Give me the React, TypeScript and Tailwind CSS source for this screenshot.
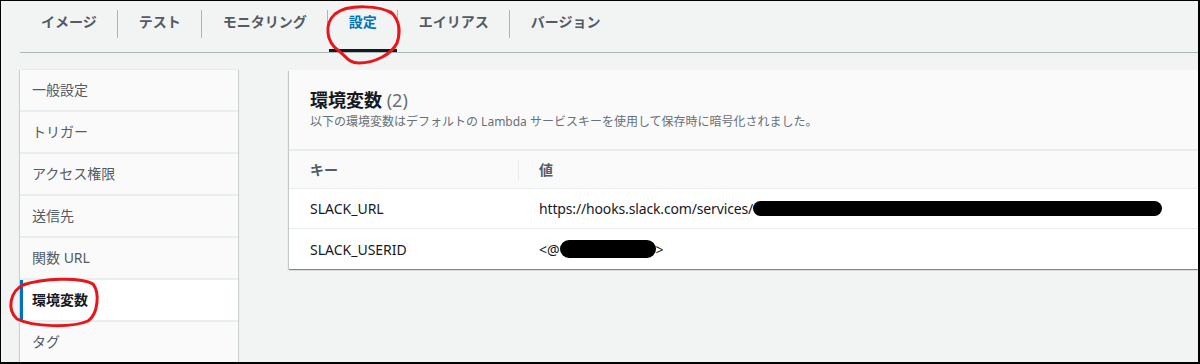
import React from 'react';

const tabs = ['イメージ', 'テスト', 'モニタリング', '設定', 'エイリアス', 'バージョン'];
const activeTab = '設定';

const sideItems = ['一般設定', 'トリガー', 'アクセス権限', '送信先', '関数 URL', '環境変数', 'タグ'];
const activeSide = '環境変数';

const Tabs = () => (
    <div className="ml-[19px] flex h-[52px] items-start border-b border-[#aab7b8]">
        {tabs.map((t, i) => (
            <React.Fragment key={t}>
                {i > 0 && <div className="mt-[9px] h-[28px] w-px bg-[#aab7b8]" />}
                <div
                    className={`relative h-[51px] pr-[20px] pl-[21px] pt-[11px] text-[14px] leading-[20px] font-bold ${
                        t === activeTab ? 'text-[#0073bb]' : 'text-[#545b64]'
                    }`}
                >
                    {t}
                    {t === activeTab && (
                        <div className="absolute bottom-0 left-[1px] right-0 h-[3px] bg-[#16191f]" />
                    )}
                </div>
            </React.Fragment>
        ))}
    </div>
);

const Sidebar = () => (
    <div className="flex w-[218px] shrink-0 flex-col gap-[2px] bg-[#eaeded] shadow-[0_1px_1px_0_rgba(0,28,36,0.2),1px_0_1px_0_rgba(0,28,36,0.12),-1px_0_1px_0_rgba(0,28,36,0.12)]">
        {sideItems.map((s) => {
            const active = s === activeSide;
            return (
                <div
                    key={s}
                    className={`flex h-[40px] shrink-0 items-center pb-[1px] text-[14px] ${
                        active
                            ? 'border-l-[3px] border-[#0073bb] bg-white pl-[9px] font-bold text-[#16191f]'
                            : 'bg-[#fafafa] pl-[12px] text-[#545b64]'
                    }`}
                >
                    {s}
                </div>
            );
        })}
    </div>
);

const Redacted = ({ w, h }: { w: number; h: number }) => (
    <span className="inline-block rounded-full bg-black align-middle" style={{ width: w, height: h }} />
);

const EnvPanel = () => (
    <div className="flex-1 self-start bg-white shadow-[0_1px_1px_0_rgba(0,28,36,0.3),1px_1px_1px_0_rgba(0,28,36,0.15),-1px_1px_1px_0_rgba(0,28,36,0.15)]">
        <div className="h-[81px] border-b-2 border-[#eaeded] bg-[#fafafa] px-[21px] pt-[17px]">
            <h2 className="text-[18px] leading-[26px] font-bold text-[#16191f]">
                環境変数 <span className="font-normal text-[#687078]">(2)</span>
            </h2>
            <p className="text-[12px] leading-[18px] text-[#687078]">
                以下の環境変数はデフォルトの Lambda サービスキーを使用して保存時に暗号化されました。
            </p>
        </div>
        <div className="flex h-[38px] items-center border-b border-[#eaeded] bg-[#fafafa] text-[14px] font-bold text-[#545b64]">
            <div className="w-[229px] pl-[21px]">キー</div>
            <div className="h-[20px] w-px bg-[#eaeded]" />
            <div className="pl-[20px]">値</div>
        </div>
        <div className="flex h-[40px] items-center border-b border-[#eaeded] text-[14px] text-[#16191f]">
            <div className="w-[250px] pl-[21px]">SLACK_URL</div>
            <div className="flex items-center tracking-[-0.15px]">
                https://hooks.slack.com/services/
                <Redacted w={409} h={15} />
            </div>
        </div>
        <div className="flex h-[40px] items-center text-[14px] text-[#16191f]">
            <div className="w-[250px] pl-[21px]">SLACK_USERID</div>
            <div className="flex items-center">
                &lt;@
                <Redacted w={96} h={18} />
                &gt;
            </div>
        </div>
    </div>
);

const Annotations = () => (
    <svg className="pointer-events-none absolute inset-0" width="1200" height="364" fill="none">
        <path
            d="M392 13 C380 4, 346 3, 334 13 C323 23, 325 41, 338 50 C345 55, 347 62, 358 62 C373 62, 390 54, 396 42 C400 30, 399 20, 390 11"
            stroke="#e8151b"
            strokeWidth="3"
            strokeLinecap="round"
        />
        <path
            d="M22 284 C42 277, 80 276, 92 283 C99 292, 97 313, 87 320 C71 327, 32 326, 16 318 C6 309, 8 290, 24 283"
            stroke="#e8151b"
            strokeWidth="3"
            strokeLinecap="round"
        />
    </svg>
);

const App = () => {
    return (
        <div className="relative h-[364px] w-[1200px] overflow-hidden border-t border-r-2 border-b-2 border-l border-black bg-[#f2f3f3] font-['Noto_Sans','Noto_Sans_CJK_JP',sans-serif]">
            <Tabs />
            <div className="mt-[17px] flex gap-[51px] pl-[19px]">
                <Sidebar />
                <EnvPanel />
            </div>
            <Annotations />
        </div>
    );
};

export default App;
